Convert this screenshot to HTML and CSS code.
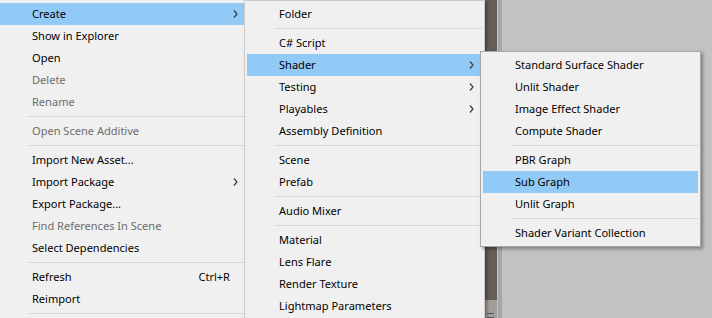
FILE: index.html
```html
<!DOCTYPE html>
<html>
<head>
<meta charset="utf-8">
<link rel="stylesheet" href="styles.css">
</head>
<body>
<div class="desk">
  <div class="strip"><span class="grip"></span></div>
  <div class="strip-edge"></div>
</div>

<div class="menu menu-main">
  <div class="item active">Create<svg class="chev" viewBox="0 0 5 8"><path d="M1 0.5 L4 4 L1 7.5"/></svg></div>
  <div class="item">Show in Explorer</div>
  <div class="item">Open</div>
  <div class="item disabled">Delete</div>
  <div class="item disabled">Rename</div>
  <div class="sep"></div>
  <div class="item disabled">Open Scene Additive</div>
  <div class="sep"></div>
  <div class="item">Import New Asset...</div>
  <div class="item">Import Package<svg class="chev" viewBox="0 0 5 8"><path d="M1 0.5 L4 4 L1 7.5"/></svg></div>
  <div class="item">Export Package...</div>
  <div class="item disabled">Find References In Scene</div>
  <div class="item">Select Dependencies</div>
  <div class="sep"></div>
  <div class="item">Refresh<span class="key">Ctrl+R</span></div>
  <div class="item">Reimport</div>
  <div class="sep"></div>
</div>

<div class="menu menu-create">
  <div class="item">Folder</div>
  <div class="sep"></div>
  <div class="item">C# Script</div>
  <div class="item active">Shader<svg class="chev" viewBox="0 0 5 8"><path d="M1 0.5 L4 4 L1 7.5"/></svg></div>
  <div class="item">Testing<svg class="chev" viewBox="0 0 5 8"><path d="M1 0.5 L4 4 L1 7.5"/></svg></div>
  <div class="item">Playables<svg class="chev" viewBox="0 0 5 8"><path d="M1 0.5 L4 4 L1 7.5"/></svg></div>
  <div class="item">Assembly Definition</div>
  <div class="sep"></div>
  <div class="item">Scene</div>
  <div class="item">Prefab</div>
  <div class="sep"></div>
  <div class="item">Audio Mixer</div>
  <div class="sep"></div>
  <div class="item">Material</div>
  <div class="item">Lens Flare</div>
  <div class="item">Render Texture</div>
  <div class="item">Lightmap Parameters</div>
</div>

<div class="menu menu-shader">
  <div class="item">Standard Surface Shader</div>
  <div class="item">Unlit Shader</div>
  <div class="item">Image Effect Shader</div>
  <div class="item">Compute Shader</div>
  <div class="sep"></div>
  <div class="item">PBR Graph</div>
  <div class="item active">Sub Graph</div>
  <div class="item">Unlit Graph</div>
  <div class="sep"></div>
  <div class="item">Shader Variant Collection</div>
</div>
</body>
</html>
```

FILE: styles.css
```css
html, body {
  margin: 0;
  padding: 0;
}
body {
  width: 712px;
  height: 318px;
  overflow: hidden;
  position: relative;
  background: #c2c2c2;
  font-family: "Noto Sans", "Open Sans", sans-serif;
  font-size: 11.05px;
  color: #000;
}

.desk {
  position: absolute;
  left: 485px;
  top: 0;
  width: 17px;
  height: 318px;
  display: flex;
}
.strip {
  width: 12px;
  height: 318px;
  background: linear-gradient(#655d57 0, #655d57 300px, #a19d99 300px);
  position: relative;
}
.grip {
  position: absolute;
  left: 2px;
  top: 313px;
  width: 7px;
  height: 3px;
  border-top: 1px solid #555;
  border-bottom: 1px solid #555;
}
.strip-edge {
  width: 4px;
  margin-left: 1px;
  background: #a6a6a6;
}

.menu {
  position: absolute;
  background: #f0f0f0;
  border: 1px solid #cccccc;
  padding: 2px;
  box-sizing: border-box;
  display: flex;
  flex-direction: column;
  box-shadow: 2px 2px 3px rgba(0, 0, 0, 0.35);
}
.menu-main {
  left: -3px;
  top: -1px;
  width: 252px;
  height: 320px;
  padding-top: 3px;
}
.menu-create {
  left: 244px;
  top: 0;
  width: 241px;
  height: 318px;
  border-bottom: none;
  overflow: hidden;
}
.menu-shader {
  left: 480px;
  top: 51px;
  width: 221px;
  height: 196px;
  border-color: #a8a8a8;
}

.item {
  flex: 0 0 22px;
  height: 22px;
  line-height: 22px;
  padding-left: 32px;
  padding-right: 8px;
  display: flex;
  align-items: center;
  white-space: nowrap;
}
.item.active {
  background: #91c9f7;
}
.item.disabled {
  color: #6d6d6d;
}
.chev {
  margin-left: auto;
  width: 5px;
  height: 8px;
  fill: none;
  stroke: #3c3c3c;
  stroke-width: 1.2;
}
.key {
  margin-left: auto;
  margin-right: 8px;
}
.sep {
  flex: 0 0 1px;
  height: 1px;
  margin: 3px 0 3px 28px;
  background: #d7d7d7;
}
```
